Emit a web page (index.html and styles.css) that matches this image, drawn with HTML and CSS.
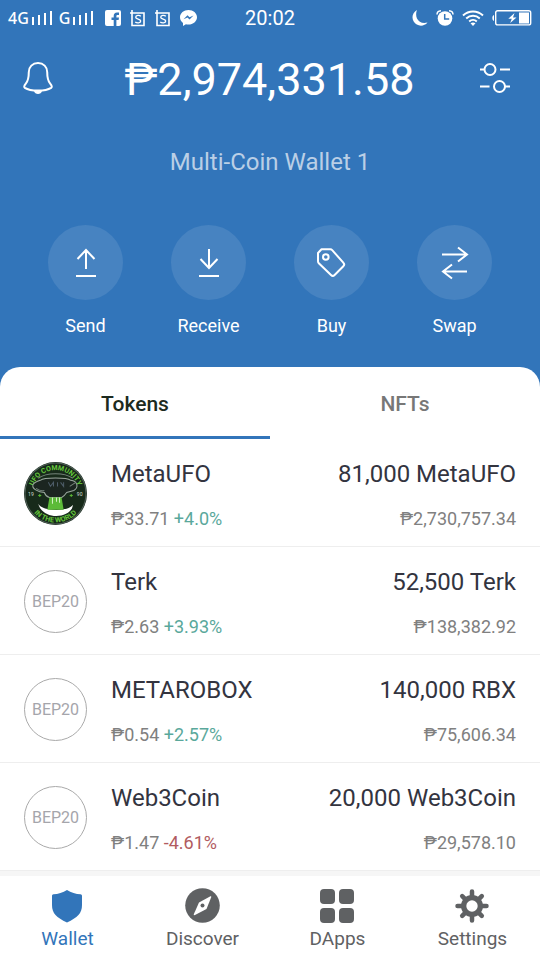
FILE: index.html
```html
<!DOCTYPE html>
<html lang="en">
<head>
<meta charset="utf-8">
<meta name="viewport" content="width=device-width, initial-scale=1">
<title>Wallet</title>
<link rel="stylesheet" href="styles.css">
</head>
<body>
<div class="app">
  <header class="hero">
    <div class="status">
      <div class="status-left">
        <span class="carrier">4G<svg width="21" height="15" viewBox="0 0 21 15" fill="#fff"><path d="M0 6h2v8H0zM6 4h2v10H6zM12 2h2v12h-2zM18 0h2v14h-2z"/></svg></span>
        <span class="carrier">G<svg width="21" height="15" viewBox="0 0 21 15" fill="#fff"><path d="M0 6h2v8H0zM6 4h2v10H6zM12 2h2v12h-2zM18 0h2v14h-2z"/></svg></span>
        <span class="notices">
          <svg width="16" height="16" viewBox="0 0 16 16"><rect width="16" height="16" rx="2" fill="#fff"/><path d="M8.700 16V10H6.500V7.500h2.200V6c0-2.300 1.200-3.500 3.300-3.500h2v2.500h-1.400c-.9 0-1.200.4-1.200 1.200v1.300h2.600l-.4 2.500h-2.200v6z" fill="#3275ba"/></svg>
          <svg width="16" height="17" viewBox="0 0 16 17" fill="none" stroke="#fff"><path d="M0 3h14v12.500H2V0" stroke-width="1.600"/><path d="M10.800 6.300C9.500 5 5.700 5 5.700 7.300c0 2.200 5 1.500 5 3.800 0 2.200-3.900 2.200-5.500.8" stroke-width="1.300"/></svg>
          <svg width="16" height="17" viewBox="0 0 16 17" fill="none" stroke="#fff"><path d="M0 3h14v12.500H2V0" stroke-width="1.600"/><path d="M10.800 6.300C9.500 5 5.700 5 5.700 7.300c0 2.200 5 1.500 5 3.800 0 2.200-3.900 2.200-5.500.8" stroke-width="1.300"/></svg>
          <svg width="17" height="16" viewBox="0 0 17 16"><path d="M8.500 0C3.800 0 0 3.200 0 7.300c0 2.300 1.200 4.300 3 5.600V16l2.900-1.700c.8.2 1.700.3 2.600.3 4.700 0 8.500-3.200 8.500-7.300S13.200 0 8.500 0z" fill="#fff"/><path d="M3.500 9.300l4-4 2 2 4-1.700-4 4-2-2z" fill="#3275ba"/></svg>
        </span>
      </div>
      <time class="clock">20:02</time>
      <div class="status-right">
        <svg width="16" height="16" viewBox="0 0 16 16"><path d="M5 0C.5 2.500-.7 7.500 1.700 11.600c2.700 4.800 10 5.700 13.800 1C10.500 14 6.600 12 5 8.500 3.800 5.700 3.900 2.500 5 0z" fill="#fff"/></svg>
        <svg width="18" height="16" viewBox="0 0 18 16"><circle cx="9" cy="8.500" r="7.300" fill="#fff"/><path d="M1 4.500C1 2.500 2.500 1 5 .8M17 4.500C17 2.500 15.500 1 13 .8" fill="none" stroke="#fff" stroke-width="1.500"/><path d="M8.700 4v5h4.500" fill="none" stroke="#3275ba" stroke-width="1.500"/></svg>
        <svg width="22" height="16" viewBox="0 0 22 16" fill="none" stroke="#fff" stroke-width="2"><path d="M1 5.500c5.800-5.300 14.200-5.300 20 0M4.200 8.500c4-3.600 9.600-3.600 13.600 0M7.200 11.500c2.200-2 5.400-2 7.600 0"/><path d="M8.500 13.300c1.600-1.200 3.400-1.200 5 0L11 16z" fill="#fff" stroke="none"/></svg>
        <svg width="40" height="16" viewBox="0 0 40 16"><rect x="3.700" y=".7" width="35" height="14.200" rx="2" fill="none" stroke="#fff" stroke-width="1.400"/><path d="M2 5C-.2 5.500-.2 10.500 2 11z" fill="#fff"/><path d="M27 2.500h10v11H27zM22.500 3l-6.200 5.700h3.500L18.200 13l6.300-5.600H21z" fill="#fff"/></svg>
      </div>
    </div>

    <div class="balance-row">
      <button class="icon-button" aria-label="Notifications">
        <svg width="30" height="34" viewBox="0 0 30 34" fill="none" stroke="#fff" stroke-width="2" stroke-linejoin="round"><path d="M15 1C9.500 1 5.800 5 5.800 10c0 6-.8 9-3 11.700-1.600 2-2.100 3.300-.9 4.200C4.800 27.800 9.900 28.600 15 28.600s10.200-.8 13.100-2.700c1.200-.9.700-2.200-.9-4.200-2.200-2.700-3-5.700-3-11.700 0-5-3.700-9-9.200-9z"/><path d="M11 29c.7 4 7.300 4 8 0z" fill="#fff" stroke="none"/></svg>
      </button>
      <h1 class="balance">₱2,974,331.58</h1>
      <button class="icon-button" aria-label="Manage tokens">
        <svg width="30" height="32" viewBox="0 0 30 32" fill="none" stroke="#fff" stroke-width="2"><circle cx="10" cy="6.500" r="5.500"/><circle cx="19.500" cy="23.500" r="5.500"/><path d="M0 6.500h4.500M20 6.500h10M0 23.500h9.500M25 23.500h5"/></svg>
      </button>
    </div>
    <p class="wallet-name">Multi-Coin Wallet 1</p>

    <div class="actions">
      <button class="action"><span class="disc"><svg width="30" height="30" viewBox="0 0 30 30" fill="none" stroke="#fff" stroke-width="2"><path d="M15 21V2M6.500 11L15 2l8.500 9M5 28h20"/></svg></span>Send</button>
      <button class="action"><span class="disc"><svg width="30" height="30" viewBox="0 0 30 30" fill="none" stroke="#fff" stroke-width="2"><path d="M15 1v19M6.500 11L15 20l8.500-9M5 28h20"/></svg></span>Receive</button>
      <button class="action"><span class="disc"><svg width="30" height="30" viewBox="0 0 30 30" fill="none" stroke="#fff" stroke-width="2" stroke-linejoin="round"><path d="M1 5v8.200c0 .8.300 1.500.8 2L14 27c1.100 1.100 2.500 1.100 3.600 0l8.700-8.700c1.100-1.100 1.100-2.500 0-3.600L15.200 2.100c-.5-.5-1-.8-1.800-.8H4.500z"/><circle cx="8.800" cy="9" r="2.800"/></svg></span>Buy</button>
      <button class="action"><span class="disc"><svg width="30" height="34" viewBox="0 0 30 34" fill="none" stroke="#fff" stroke-width="2"><path d="M2 8.500h24M18 1.500l9 7-9 7M27 25.500H3M12 18.500l-9 7 9 7"/></svg></span>Swap</button>
    </div>
  </header>

  <main class="sheet">
    <div class="tabs" role="tablist">
      <button class="tab tab-active" role="tab" aria-selected="true">Tokens</button>
      <button class="tab" role="tab" aria-selected="false">NFTs</button>
    </div>
    <ul class="tokens">
      <li class="token">
        <svg class="logo" viewBox="0 0 62 62" role="img" aria-label="MetaUFO">
          <defs><path id="arc-top" d="M8 31a23 23 0 0 1 46 0"/><path id="arc-bottom" d="M2.500 31a28.500 28.500 0 0 0 57 0"/></defs>
          <circle cx="31" cy="31" r="31" fill="#172a1a"/>
          <circle cx="31" cy="31" r="30" fill="none" stroke="#52605a" stroke-width="1"/>
          <text class="logo-ring" text-anchor="middle"><textPath href="#arc-top" startOffset="50%">UFO COMMUNITY</textPath></text>
          <text class="logo-ring" text-anchor="middle"><textPath href="#arc-bottom" startOffset="50%">IN THE WORLD</textPath></text>
          <path d="M16 18c4-3 26-3 30 0 7 1 8 7 3 10l-7 2c-2 3-3 4-5 5H25c-3-1-4-2-5-5-6 0-13-4-11-8 1-2 4-3 7-4z" fill="#1b2520" stroke="#9aa79d" stroke-width="1"/>
          <path d="M14 16c8-6 26-6 34 0M45 24l6-4M12 26q4 3 8 2" fill="none" stroke="#75847a"/>
          <path d="M24 20l2 4 3-4v4m4-4v4m3-4l3 4v-4" fill="none" stroke="#4d5c68"/>
          <path d="M14 41c4 8 30 8 34 1 0 13-29 17-34-1z" fill="#fff"/>
          <path d="M25 35h12l2 12H23z" fill="#5cbb38"/>
          <path d="M28 35v6m4-6v4m3-4v5" stroke="#d5f2c7"/>
          <path d="M14 33h3m-1.500-1.500v3M45 33h3m-1.500-1.500v3" stroke="#58b334"/>
          <text class="logo-year" x="4" y="33">19</text><text class="logo-year" x="52" y="33">90</text>
        </svg>
        <div class="info"><span class="name">MetaUFO</span><span class="price">₱33.71 <span class="up">+4.0%</span></span></div>
        <div class="info holding"><span class="name">81,000 MetaUFO</span><span class="price">₱2,730,757.34</span></div>
      </li>
      <li class="token">
        <span class="logo badge">BEP20</span>
        <div class="info"><span class="name">Terk</span><span class="price">₱2.63 <span class="up">+3.93%</span></span></div>
        <div class="info holding"><span class="name">52,500 Terk</span><span class="price">₱138,382.92</span></div>
      </li>
      <li class="token">
        <span class="logo badge">BEP20</span>
        <div class="info"><span class="name">METAROBOX</span><span class="price">₱0.54 <span class="up">+2.57%</span></span></div>
        <div class="info holding"><span class="name">140,000 RBX</span><span class="price">₱75,606.34</span></div>
      </li>
      <li class="token">
        <span class="logo badge">BEP20</span>
        <div class="info"><span class="name">Web3Coin</span><span class="price">₱1.47 <span class="down">-4.61%</span></span></div>
        <div class="info holding"><span class="name">20,000 Web3Coin</span><span class="price">₱29,578.10</span></div>
      </li>
    </ul>
  </main>

  <nav class="nav">
    <a class="nav-item nav-active" href="#wallet"><svg width="36" height="36" viewBox="0 0 36 36" fill="currentColor"><path d="M17 2c4 2.700 9 4 13.500 4.300.9.100 1.500.7 1.500 1.700v9c0 8.500-4.500 12.500-15 17.500C6.500 29.500 2 25.500 2 17V8c0-1 .6-1.600 1.500-1.700C8 6 13 4.700 17 2z"/></svg>Wallet</a>
    <a class="nav-item" href="#discover"><svg width="36" height="36" viewBox="0 0 36 36"><circle cx="17.500" cy="17.500" r="17.300" fill="currentColor"/><path d="M25 8.500c1-.4 1.500.1 1.100 1.100L21.500 21 10 27c-1 .4-1.500-.1-1.100-1.100L14 14.500z" fill="#fff"/><circle cx="17.500" cy="17.500" r="2" fill="currentColor"/></svg>Discover</a>
    <a class="nav-item" href="#dapps"><svg width="36" height="36" viewBox="0 0 36 36" fill="currentColor"><rect y="1" width="15" height="15" rx="4"/><rect x="19" y="1" width="15" height="15" rx="4"/><rect y="20" width="15" height="15" rx="4"/><rect x="19" y="20" width="15" height="15" rx="4"/></svg>DApps</a>
    <a class="nav-item" href="#settings"><svg width="36" height="36" viewBox="0 0 36 36"><g stroke="currentColor" stroke-width="4.500" stroke-linecap="round"><path d="M17 3.500v29M2.500 18h29M7.200 8.200l19.600 19.600M26.800 8.200L7.200 27.800"/></g><circle cx="17" cy="18" r="11" fill="currentColor"/><circle cx="17" cy="18" r="5.700" fill="#fff"/></svg>Settings</a>
  </nav>
</div>
</body>
</html>
```
FILE: styles.css
```css
* {
  box-sizing: border-box;
}

body {
  margin: 0;
  background: #fff;
  font-family: Roboto, "Liberation Sans", sans-serif;
}

button {
  padding: 0;
  border: 0;
  background: none;
  color: inherit;
  font: inherit;
}

svg {
  display: block;
  flex: none;
}

.app {
  display: flex;
  flex-direction: column;
  min-height: 100vh;
  background: #3275ba;
}

.hero {
  padding-bottom: 29px;
  color: #fff;
}

.status {
  display: grid;
  grid-template-columns: 1fr auto 1fr;
  align-items: center;
  height: 36px;
  padding: 0 8px;
}

.status-left,
.status-right,
.notices,
.carrier {
  display: flex;
  align-items: center;
}

.status-left {
  gap: 6px;
}

.carrier {
  gap: 3px;
  font: 500 16px/20px "Noto Sans", sans-serif;
}

.notices {
  gap: 9px;
  margin-left: 5px;
}

.status-right {
  gap: 8px;
  justify-content: flex-end;
}

.clock {
  font-size: 20px;
}

.balance-row {
  display: grid;
  grid-template-columns: 30px 1fr 30px;
  align-items: center;
  height: 86px;
  padding: 0 30px 0 23px;
}

.balance {
  margin: 0;
  padding-left: 6px;
  font-size: 45px;
  font-weight: 400;
  text-align: center;
}

.wallet-name {
  margin: 26px 0 49px;
  color: #bacfe6;
  font-size: 24px;
  line-height: 28px;
  text-align: center;
}

.actions {
  display: grid;
  grid-template-columns: repeat(4, 1fr);
  padding: 0 24px;
}

.action {
  display: flex;
  flex-direction: column;
  align-items: center;
  gap: 14px;
  font-size: 18px;
  line-height: 24px;
}

.disc {
  display: grid;
  place-items: center;
  width: 75px;
  height: 75px;
  border-radius: 50%;
  background: #4783c1;
}

.sheet {
  flex: 1;
  overflow: hidden;
  border-radius: 20px 20px 0 0;
  background: #fff;
}

.tabs {
  display: grid;
  grid-template-columns: 1fr 1fr;
}

.tab {
  height: 72px;
  padding-top: 4px;
  border-bottom: 3px solid transparent;
  color: #777;
  font-size: 21px;
  font-weight: 500;
}

.tab-active {
  border-color: #3275ba;
  color: #1c2a20;
}

.tokens {
  margin: 0;
  padding: 0;
  list-style: none;
}

.token {
  display: flex;
  align-items: center;
  height: 108px;
  padding: 2px 24px 0;
  border-bottom: 1px solid #eee;
}

.logo {
  flex: none;
  width: 63px;
  height: 63px;
  margin-right: 24px;
}

.logo-ring {
  fill: #65c63c;
  font-size: 7px;
  font-weight: 700;
}

.logo-year {
  fill: #d6ddd7;
  font-size: 5px;
}

.badge {
  display: grid;
  place-items: center;
  border: 1px solid #aaa;
  border-radius: 50%;
  color: #a5a5ab;
  font-size: 16px;
}

.info {
  display: flex;
  flex-direction: column;
  gap: 19px;
  padding-top: 4px;
  white-space: nowrap;
}

.holding {
  margin-left: auto;
  text-align: right;
}

.name {
  color: #33343f;
  font-size: 24px;
  line-height: 28px;
}

.price {
  color: #808080;
  font-size: 18px;
  line-height: 24px;
}

.up {
  color: #5aa89b;
}

.down {
  color: #b15b60;
}

.nav {
  display: grid;
  grid-template-columns: repeat(4, 1fr);
  padding: 12px 0 9px;
  border-top: 5px solid #f6f6f6;
  background: #fff;
}

.nav-item {
  display: flex;
  flex-direction: column;
  align-items: center;
  gap: 3px;
  color: #5f6163;
  font-size: 19px;
  line-height: 24px;
  text-decoration: none;
}

.nav-active {
  color: #3275ba;
}
```
